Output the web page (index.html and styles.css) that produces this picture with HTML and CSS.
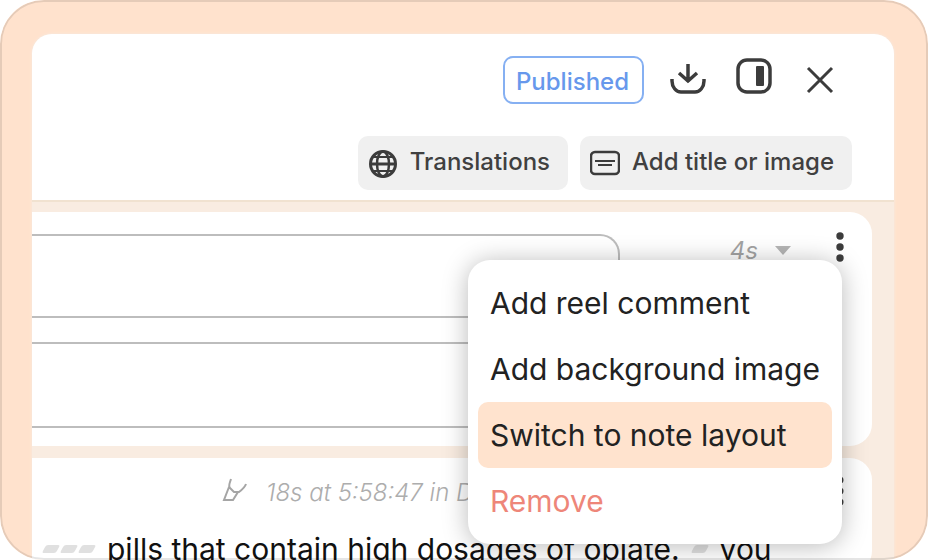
FILE: index.html
```html
<!DOCTYPE html>
<html lang="en">
<head>
<meta charset="utf-8">
<title>Reel editor</title>
<link rel="stylesheet" href="styles.css">
</head>
<body>
<main class="frame">
  <section class="panel">
    <header class="header">
      <div class="status-row">
        <button class="status" type="button">Published</button>
        <div class="actions">
          <button class="icon-button" type="button" aria-label="Download">
            <svg width="36" height="40" viewBox="0 0 36 40" fill="none" stroke="#3c3c3c" stroke-width="3.5">
              <path d="M18 8v18M9 17l9 8 9-8M2 23v2c0 6 4 11 9 11h14c5 0 9-5 9-11v-2"/>
            </svg>
          </button>
          <button class="icon-button" type="button" aria-label="Toggle side panel">
            <svg width="36" height="36" viewBox="0 0 36 36" fill="none" stroke="#3c3c3c" stroke-width="3.5">
              <rect x="2" y="2" width="32" height="32" rx="9"/>
              <rect x="20" y="8" width="8" height="20" rx="1" fill="#3c3c3c" stroke="none"/>
            </svg>
          </button>
          <button class="icon-button" type="button" aria-label="Close">
            <svg width="36" height="36" viewBox="0 0 36 36" fill="none" stroke="#3c3c3c" stroke-width="3">
              <path d="M6 10l24 24M30 10L6 34"/>
            </svg>
          </button>
        </div>
      </div>
      <div class="tool-row">
        <button class="tool" type="button">
          <svg width="30" height="30" viewBox="0 0 30 30" fill="none" stroke="#3c3c3c" stroke-width="3">
            <circle cx="15" cy="16" r="12.5"/>
            <ellipse cx="15" cy="16" rx="6" ry="12.5" stroke-width="2.5"/>
            <path d="M2 16h26"/>
            <path d="M5 9h20M5 23h20" stroke-width="2"/>
          </svg>
          <span>Translations</span>
        </button>
        <button class="tool" type="button">
          <svg width="30" height="30" viewBox="0 0 30 30" fill="none" stroke="#3c3c3c" stroke-width="2">
            <rect x="1" y="4" width="28" height="22" rx="4" stroke-width="2.5"/>
            <path d="M5 13h20M8 17h14"/>
          </svg>
          <span>Add title or image</span>
        </button>
      </div>
    </header>
    <div class="cards">
      <article class="card">
        <div class="fields">
          <input class="field" type="text" aria-label="Clip title">
          <input class="field" type="text" aria-label="Clip description">
        </div>
        <button class="duration" type="button">
          <span>4s</span>
          <svg width="18" height="10" viewBox="0 0 18 10"><path d="M1 0h16L9 9z" fill="#b5b5b5"/></svg>
        </button>
        <div class="more-wrap">
          <button class="more" type="button" aria-label="More options">
            <svg width="8" height="30" viewBox="0 0 8 30" fill="#3c3c3c"><circle cx="4" cy="4" r="3.7"/><circle cx="4" cy="15" r="3.7"/><circle cx="4" cy="26" r="3.7"/></svg>
          </button>
          <div class="menu" role="menu">
            <button class="menu-item" type="button" role="menuitem">Add reel comment</button>
            <button class="menu-item" type="button" role="menuitem">Add background image</button>
            <button class="menu-item selected" type="button" role="menuitem">Switch to note layout</button>
            <button class="menu-item danger" type="button" role="menuitem">Remove</button>
          </div>
        </div>
      </article>
      <article class="card quote">
        <div class="source">
          <svg width="26" height="30" viewBox="0 0 26 30" fill="none" stroke="#a5a5a5" stroke-width="2">
            <path d="M9 2L8 5c-1 3-1 5 0 6l4 4h5c4-3 6-5 7-8M7 10L2 23h9l5-8"/>
          </svg>
          <span>18s at 5:58:47 in D</span>
          <button class="more" type="button" aria-label="More options">
            <svg width="8" height="30" viewBox="0 0 8 30" fill="#3c3c3c"><circle cx="4" cy="3" r="3.5"/><circle cx="4" cy="14" r="3.5"/><circle cx="4" cy="25" r="3.5"/></svg>
          </button>
        </div>
        <p class="transcript"><span class="gap"></span><span class="gap"></span><span class="gap"></span><span class="words">pills that contain high dosages of opiate.</span><span class="gap"></span><span class="words">you</span></p>
      </article>
    </div>
  </section>
</main>
</body>
</html>
```
FILE: styles.css
```css
* {
  box-sizing: border-box;
}

body {
  margin: 0;
  background: #fff;
  font-family: Inter, "Liberation Sans", sans-serif;
}

button {
  border: 0;
  padding: 0;
  background: none;
  font: inherit;
  color: inherit;
}

svg {
  display: block;
  flex: none;
}

.frame {
  position: relative;
  height: 100vh;
  padding: 34px 34px 0 32px;
  border-radius: 44px;
  background: #ffe2cd;
  overflow: hidden;
}

.frame::after {
  content: "";
  position: absolute;
  inset: 0;
  border: 2px solid rgba(0, 0, 0, 0.1);
  border-radius: 44px;
  pointer-events: none;
}

.panel {
  border-radius: 20px 20px 0 0;
  background: #f9ece1;
  box-shadow: 0 0 3px #f4ece6;
}

.header {
  display: flex;
  flex-direction: column;
  gap: 32px;
  padding: 22px 42px 10px;
  border-bottom: 2px solid #f1e2d0;
  border-radius: 20px 20px 0 0;
  background: #fff;
}

.status-row,
.tool-row,
.actions {
  display: flex;
  justify-content: flex-end;
}

.status-row {
  gap: 26px;
  padding-right: 14px;
}

.status {
  height: 48px;
  padding: 2px 13px 0 11px;
  border: 2px solid #86b0f2;
  border-radius: 10px;
  color: #6798ec;
  font-size: 24px;
  font-weight: 500;
}

.actions {
  gap: 30px;
}

.icon-button {
  height: 40px;
}

.tool-row {
  gap: 12px;
}

.tool {
  display: flex;
  align-items: center;
  gap: 12px;
  height: 54px;
  padding: 0 18px 0 10px;
  border-radius: 10px;
  background: #f0f0f0;
  color: #404040;
  font-size: 24px;
  font-weight: 500;
}

.tool span {
  padding-bottom: 4px;
}

.cards {
  display: grid;
  gap: 12px;
  padding: 10px 22px 0 0;
}

.card {
  display: flex;
  border-radius: 0 22px 22px 0;
  background: #fff;
}

.fields {
  display: flex;
  flex: 1;
  flex-direction: column;
  gap: 24px;
  padding: 22px 0 18px;
}

.field {
  width: 100%;
  height: 84px;
  border: 2px solid #bdbdbd;
  border-left: 0;
  border-radius: 0 20px 20px 0;
  background: transparent;
}

.field + .field {
  height: 86px;
}

.duration {
  display: flex;
  align-items: center;
  align-self: flex-start;
  gap: 16px;
  margin: 24px 44px 0 110px;
  color: #a3a3a3;
  font-size: 24px;
  font-style: italic;
}

.more-wrap {
  position: relative;
  align-self: flex-start;
  margin: 20px 28px 0 0;
}

.more {
  display: block;
}

.menu {
  position: absolute;
  z-index: 1;
  top: 28px;
  right: 2px;
  display: grid;
  padding: 10px;
  border-radius: 22px;
  background: #fff;
  box-shadow: 0 2px 26px rgba(0, 0, 0, 0.28);
}

.menu-item {
  height: 66px;
  padding: 0 12px;
  border-radius: 10px;
  color: #222;
  font-size: 30px;
  text-align: left;
  white-space: nowrap;
}

.menu-item.selected {
  background: #ffe3ce;
}

.menu-item.danger {
  color: #ee8679;
}

.quote {
  flex-direction: column;
  gap: 18px;
  padding: 18px 28px 0 12px;
}

.source {
  display: flex;
  align-items: center;
  gap: 18px;
  padding-left: 178px;
  color: #adadad;
  font-size: 24px;
  font-style: italic;
  font-weight: 300;
}

.source span {
  padding-top: 2px;
}

.source .more {
  margin-left: auto;
}

.transcript {
  display: flex;
  align-items: center;
  gap: 4px;
  margin: 0;
  color: #111;
  font-size: 30px;
  line-height: 48px;
  white-space: nowrap;
}

.gap {
  width: 14px;
  height: 8px;
  border-radius: 2px;
  background: #e0e0e0;
  transform: skewX(-28deg);
}

.words {
  margin: 0 9px;
}
```
